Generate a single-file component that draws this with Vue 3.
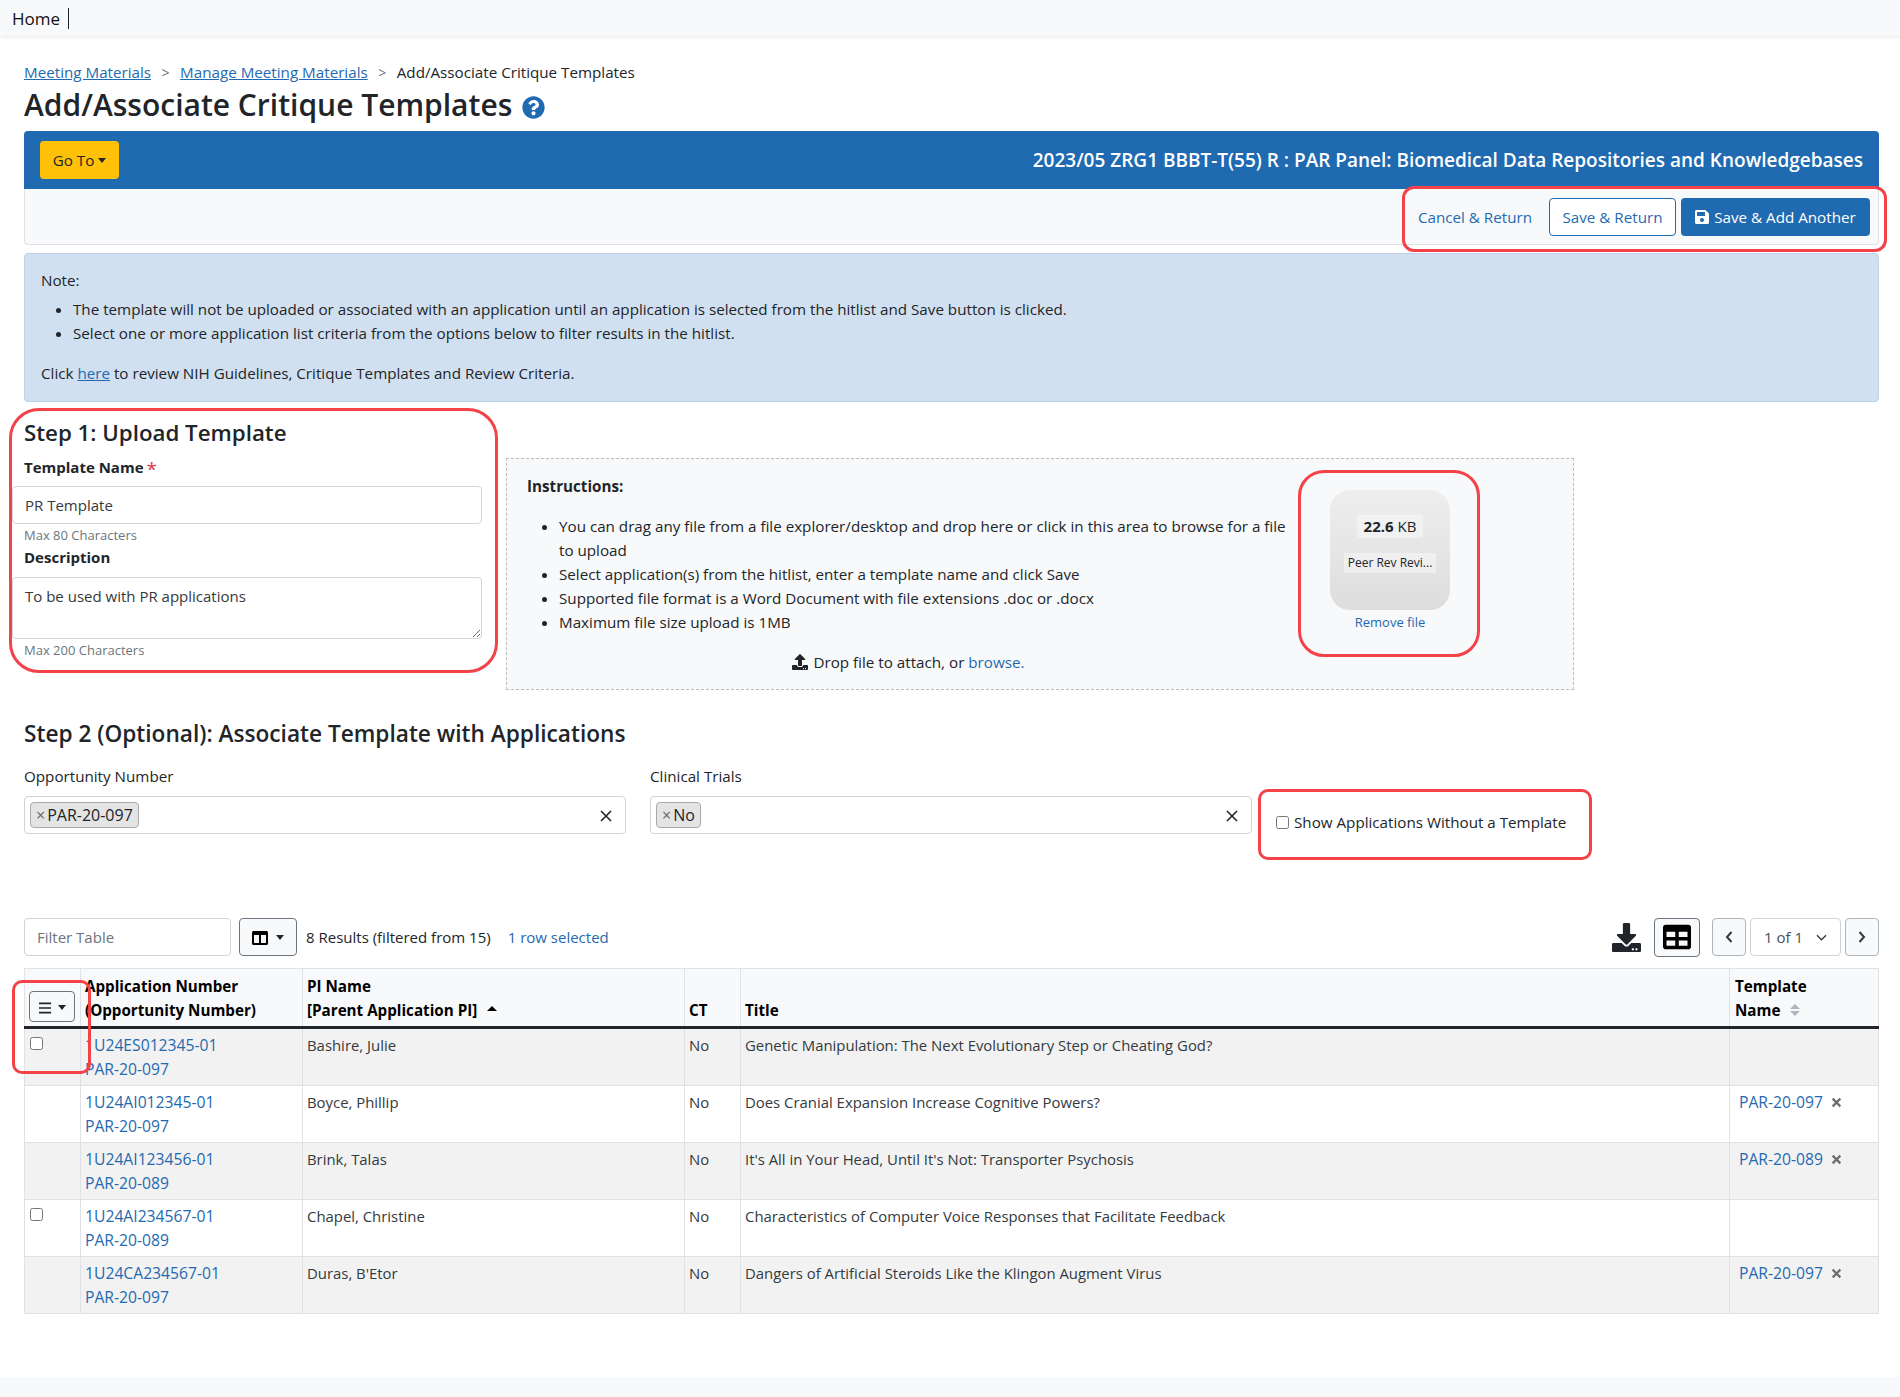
<template>
  <div class="app-root">
    <nav class="topnav"><a class="home-link">Home</a></nav>

    <main class="page">
      <div class="breadcrumb">
        <a class="link">Meeting Materials</a>
        <span class="crumb-sep">&gt;</span>
        <a class="link">Manage Meeting Materials</a>
        <span class="crumb-sep">&gt;</span>
        <span>Add/Associate Critique Templates</span>
      </div>
      <h1 class="page-title">
        Add/Associate Critique Templates
        <svg class="help-icon" viewBox="0 0 512 512"><path fill="#1f6ab0" d="M504 256c0 136.997-111.043 248-248 248S8 392.997 8 256C8 119.083 119.043 8 256 8s248 111.083 248 248zM262.655 90c-54.497 0-89.255 22.957-116.549 63.758-3.536 5.286-2.353 12.415 2.715 16.258l34.699 26.31c5.205 3.947 12.621 3.008 16.665-2.122 17.864-22.658 30.113-35.797 57.303-35.797 20.429 0 45.698 13.148 45.698 32.958 0 14.976-12.363 22.667-32.534 33.976C247.128 238.528 216 254.941 216 296v4c0 6.627 5.373 12 12 12h56c6.627 0 12-5.373 12-12v-1.333c0-28.462 83.186-29.647 83.186-106.667 0-58.002-60.165-102-116.531-102zM256 338c-25.365 0-46 20.635-46 46 0 25.364 20.635 46 46 46s46-20.636 46-46c0-25.365-20.635-46-46-46z"/></svg>
      </h1>

      <div class="meeting-bar">
        <button class="btn btn-goto">Go To<span class="caret"></span></button>
        <div class="meeting-name">2023/05 ZRG1 BBBT-T(55) R : PAR Panel: Biomedical Data Repositories and Knowledgebases</div>
      </div>
      <div class="action-bar">
        <a class="cancel-link">Cancel &amp; Return</a>
        <button class="btn btn-outline">Save &amp; Return</button>
        <button class="btn btn-primary">
          <svg class="save-icon" viewBox="0 0 448 512"><path fill="#fff" d="M433.941 129.941l-83.882-83.882A48 48 0 0 0 316.118 32H48C21.49 32 0 53.49 0 80v352c0 26.51 21.49 48 48 48h352c26.51 0 48-21.49 48-48V163.882a48 48 0 0 0-14.059-33.941zM224 416c-35.346 0-64-28.654-64-64 0-35.346 28.654-64 64-64s64 28.654 64 64c0 35.346-28.654 64-64 64zm96-304.52V212c0 6.627-5.373 12-12 12H76c-6.627 0-12-5.373-12-12V108c0-6.627 5.373-12 12-12h228.52c3.183 0 6.235 1.264 8.485 3.515l3.48 3.48A11.996 11.996 0 0 1 320 111.48z"/></svg>
          Save &amp; Add Another
        </button>
      </div>

      <div class="note">
        <div class="note-title">Note:</div>
        <ul>
          <li>The template will not be uploaded or associated with an application until an application is selected from the hitlist and Save button is clicked.</li>
          <li>Select one or more application list criteria from the options below to filter results in the hitlist.</li>
        </ul>
        <div class="note-foot">Click <a class="link">here</a> to review NIH Guidelines, Critique Templates and Review Criteria.</div>
      </div>

      <section class="step-one">
        <div class="upload-form">
          <h2 class="step-title">Step 1: Upload Template</h2>
          <label class="field-label label-first">Template Name<span class="required">*</span></label>
          <input class="text-input" type="text" value="PR Template" />
          <div class="hint">Max 80 Characters</div>
          <label class="field-label label-desc">Description</label>
          <textarea class="text-area">To be used with PR applications</textarea>
          <div class="hint">Max 200 Characters</div>
        </div>

        <div class="dropzone">
          <div class="dz-text">
            <div class="dz-heading">Instructions:</div>
            <ul>
              <li v-for="line in instructions" :key="line">{{ line }}</li>
            </ul>
            <div class="dz-drop">
              <svg class="upload-icon" viewBox="0 0 512 512"><path fill="#212529" d="M296 384h-80c-13.3 0-24-10.7-24-24V192h-87.7c-17.8 0-26.7-21.5-14.1-34.1L242.3 5.7c7.5-7.5 19.8-7.5 27.3 0l152.2 152.2c12.6 12.6 3.7 34.1-14.1 34.1H320v168c0 13.3-10.7 24-24 24zm216-8v112c0 13.3-10.7 24-24 24H24c-13.3 0-24-10.7-24-24V376c0-13.3 10.7-24 24-24h136v8c0 30.9 25.1 56 56 56h80c30.9 0 56-25.1 56-56v-8h136c13.3 0 24 10.7 24 24zm-124 88c0-11-9-20-20-20s-20 9-20 20 9 20 20 20 20-9 20-20zm64 0c0-11-9-20-20-20s-20 9-20 20 9 20 20 20 20-9 20-20z"/></svg>
              Drop file to attach, or <a class="browse">browse.</a>
            </div>
          </div>
          <div class="dz-preview">
            <div class="dz-image">
              <div class="dz-size"><strong>22.6</strong> KB</div>
              <div class="dz-file">Peer Rev Revi...</div>
            </div>
            <a class="dz-remove">Remove file</a>
          </div>
        </div>
      </section>

      <h2 class="step-title step-two">Step 2 (Optional): Associate Template with Applications</h2>
      <div class="filters">
        <div class="filter-col">
          <label class="filter-label">Opportunity Number</label>
          <div class="tag-select">
            <span class="tag"><span class="tag-x">×</span>PAR-20-097</span>
            <svg class="clear-x" viewBox="0 0 14 14"><path d="M2 2l10 10M12 2L2 12" stroke="#212529" stroke-width="1.6" fill="none"/></svg>
          </div>
        </div>
        <div class="filter-col">
          <label class="filter-label">Clinical Trials</label>
          <div class="tag-select">
            <span class="tag"><span class="tag-x">×</span>No</span>
            <svg class="clear-x" viewBox="0 0 14 14"><path d="M2 2l10 10M12 2L2 12" stroke="#212529" stroke-width="1.6" fill="none"/></svg>
          </div>
        </div>
        <label class="no-template"><input type="checkbox" />Show Applications Without a Template</label>
      </div>

      <div class="table-tools">
        <input class="filter-input" type="text" placeholder="Filter Table" />
        <button class="btn btn-light btn-columns">
          <svg class="columns-icon" viewBox="0 0 512 512"><path fill="#000" d="M464 32H48C21.49 32 0 53.49 0 80v352c0 26.51 21.49 48 48 48h416c26.51 0 48-21.49 48-48V80c0-26.51-21.49-48-48-48zM224 416H64V160h160v256zm224 0H288V160h160v256z"/></svg>
          <span class="caret caret-dark"></span>
        </button>
        <span class="result-count">8 Results (filtered from 15)</span>
        <span class="row-count">1 row selected</span>
        <span class="tools-spacer"></span>
        <svg class="download-icon" viewBox="0 0 512 512"><path fill="#212529" d="M216 0h80c13.3 0 24 10.7 24 24v168h87.7c17.8 0 26.7 21.5 14.1 34.1L269.7 378.3c-7.5 7.5-19.8 7.5-27.3 0L90.1 226.1c-12.6-12.6-3.7-34.1 14.1-34.1H192V24c0-13.3 10.7-24 24-24zm296 376v112c0 13.3-10.7 24-24 24H24c-13.3 0-24-10.7-24-24V376c0-13.3 10.7-24 24-24h146.7l49 49c20.1 20.1 52.5 20.1 72.6 0l49-49H488c13.3 0 24 10.7 24 24zm-124 88c0-11-9-20-20-20s-20 9-20 20 9 20 20 20 20-9 20-20zm64 0c0-11-9-20-20-20s-20 9-20 20 9 20 20 20 20-9 20-20z"/></svg>
        <button class="btn btn-light btn-table">
          <svg class="table-icon" viewBox="0 0 512 512"><path fill="#000" d="M464 32H48C21.49 32 0 53.49 0 80v352c0 26.51 21.49 48 48 48h416c26.51 0 48-21.49 48-48V80c0-26.51-21.49-48-48-48zM224 416H64v-96h160v96zm0-160H64v-96h160v96zm224 160H288v-96h160v96zm0-160H288v-96h160v96z"/></svg>
        </button>
        <button class="btn btn-page">
          <svg class="chev" viewBox="0 0 10 14"><path d="M7.5 2L3 7l4.5 5" stroke="#343a40" stroke-width="2" fill="none"/></svg>
        </button>
        <div class="page-select">
          <span>1 of 1</span>
          <svg class="chev-down" viewBox="0 0 14 10"><path d="M2 2.5l5 5 5-5" stroke="#343a40" stroke-width="1.5" fill="none"/></svg>
        </div>
        <button class="btn btn-page">
          <svg class="chev" viewBox="0 0 10 14"><path d="M2.5 2L7 7l-4.5 5" stroke="#343a40" stroke-width="2" fill="none"/></svg>
        </button>
      </div>

      <table class="app-table">
        <colgroup>
          <col style="width: 56px" />
          <col style="width: 222px" />
          <col style="width: 382px" />
          <col style="width: 56px" />
          <col />
          <col style="width: 149px" />
        </colgroup>
        <thead>
          <tr>
            <th class="select-head">
              <button class="btn btn-light btn-menu">
                <svg class="bars-icon" viewBox="0 0 14 12"><path d="M0 1h13M0 6h13M0 11h13" stroke="#212529" stroke-width="1.7"/></svg>
                <span class="caret caret-dark"></span>
              </button>
            </th>
            <th>Application Number<br />(Opportunity Number)</th>
            <th>PI Name<br />[Parent Application PI]<span class="sort-up"></span></th>
            <th>CT</th>
            <th>Title</th>
            <th class="template-head">Template<br />Name<span class="sort-both"><i></i><i></i></span></th>
          </tr>
        </thead>
        <tbody>
          <tr v-for="row in rows" :key="row.app">
            <td class="select-cell"><input v-if="row.selectable" type="checkbox" /></td>
            <td><a class="cell-link">{{ row.app }}</a><br /><a class="cell-link">{{ row.opp }}</a></td>
            <td>{{ row.pi }}</td>
            <td>No</td>
            <td>{{ row.title }}</td>
            <td class="template-cell">
              <template v-if="row.template">
                <a class="cell-link">{{ row.template }}</a>
                <svg class="remove-x" viewBox="0 0 10 10"><path d="M1.5 1.5l7 7M8.5 1.5l-7 7" stroke="#6c6c6c" stroke-width="2" fill="none"/></svg>
              </template>
            </td>
          </tr>
        </tbody>
      </table>
    </main>

    <footer class="page-footer"></footer>

    <!-- annotation boxes drawn on top of the screenshot -->
    <div class="callout callout-actions"></div>
    <div class="callout callout-upload"></div>
    <div class="callout callout-preview"></div>
    <div class="callout callout-check"></div>
    <div class="callout callout-select"></div>
  </div>
</template>

<script setup>
const instructions = [
  'You can drag any file from a file explorer/desktop and drop here or click in this area to browse for a file to upload',
  'Select application(s) from the hitlist, enter a template name and click Save',
  'Supported file format is a Word Document with file extensions .doc or .docx',
  'Maximum file size upload is 1MB'
]

const rows = [
  { app: '1U24ES012345-01', opp: 'PAR-20-097', pi: 'Bashire, Julie', title: 'Genetic Manipulation: The Next Evolutionary Step or Cheating God?', selectable: true },
  { app: '1U24AI012345-01', opp: 'PAR-20-097', pi: 'Boyce, Phillip', title: 'Does Cranial Expansion Increase Cognitive Powers?', template: 'PAR-20-097' },
  { app: '1U24AI123456-01', opp: 'PAR-20-089', pi: 'Brink, Talas', title: "It's All in Your Head, Until It's Not: Transporter Psychosis", template: 'PAR-20-089' },
  { app: '1U24AI234567-01', opp: 'PAR-20-089', pi: 'Chapel, Christine', title: 'Characteristics of Computer Voice Responses that Facilitate Feedback', selectable: true },
  { app: '1U24CA234567-01', opp: 'PAR-20-097', pi: "Duras, B'Etor", title: 'Dangers of Artificial Steroids Like the Klingon Augment Virus', template: 'PAR-20-097' }
]
</script>

<style>
body {
  margin: 0;
  background: #fff;
}
</style>

<style scoped>
.app-root {
  position: relative;
  height: 1397px;
  overflow: hidden;
  font-family: "Open Sans", "Noto Sans", sans-serif;
  font-size: 15.2px;
  line-height: 24px;
  color: #212529;
}

.topnav {
  height: 36px;
  background: #f8f9fa;
  box-shadow: 0 1px 4px rgba(0, 0, 0, 0.1);
  padding: 7px 0 0 12px;
  box-sizing: border-box;
}

.home-link {
  display: inline-block;
  height: 21px;
  line-height: 21px;
  padding-right: 8px;
  border-right: 1px solid #212529;
  font-size: 17px;
  color: #111;
}

.page {
  padding: 0 21px 0 24px;
}

.link {
  color: #1f6ab0;
  text-decoration: underline;
}

.breadcrumb {
  margin-top: 24px;
  height: 25px;
  font-size: 15.2px;
}

.crumb-sep {
  margin: 0 10.5px;
  font-size: 14px;
  color: #6c757d;
}

.page-title {
  margin: 0 0 6px;
  font-size: 30px;
  line-height: 40px;
  font-weight: 600;
  display: flex;
  align-items: center;
}

.help-icon {
  width: 23px;
  height: 23px;
  margin: 4px 0 0 10px;
}

.btn {
  font-family: inherit;
  font-size: 15.2px;
  line-height: 24px;
  height: 38px;
  border-radius: 4px;
  border: 1px solid transparent;
  box-sizing: border-box;
  padding: 0 12px;
}

.meeting-bar {
  height: 58px;
  background: #1f6ab0;
  border-radius: 4px 4px 0 0;
  padding: 0 16px;
  display: flex;
  align-items: center;
  justify-content: space-between;
}

.btn-goto {
  width: 79px;
  padding: 0;
  background: #ffc107;
  color: #212529;
}

.caret {
  display: inline-block;
  margin-left: 4px;
  vertical-align: 3px;
  border-top: 5px solid #212529;
  border-left: 4px solid transparent;
  border-right: 4px solid transparent;
}

.meeting-name {
  color: #fff;
  font-size: 19px;
  font-weight: 600;
}

.action-bar {
  height: 56px;
  box-sizing: border-box;
  background: #f8f9fa;
  border: 1px solid #dee2e6;
  border-top: 0;
  border-radius: 0 0 4px 4px;
  padding: 0 8px;
  display: flex;
  align-items: center;
  justify-content: flex-end;
}

.cancel-link {
  color: #1f6ab0;
  margin-right: 17px;
}

.btn-outline {
  width: 127px;
  padding: 0;
  background: #fff;
  border-color: #1f6ab0;
  color: #1f6ab0;
  margin-right: 5px;
}

.btn-primary {
  width: 189px;
  padding: 0;
  background: #1f6ab0;
  color: #fff;
}

.save-icon {
  width: 14px;
  height: 16px;
  vertical-align: -2px;
  margin-right: 1px;
}

.note {
  margin-top: 8px;
  height: 149px;
  box-sizing: border-box;
  background: #d1e0f0;
  border: 1px solid #bdd1e6;
  border-radius: 4px;
  padding: 14px 16px 0;
}

.note ul {
  margin: 5px 0 16px;
  padding-left: 32px;
}

.step-one {
  margin-top: 15px;
  display: flex;
  align-items: flex-start;
}

.upload-form {
  width: 470px;
  margin-left: -12px;
}

.upload-form .step-title,
.upload-form .field-label,
.upload-form .hint {
  margin-left: 12px;
}

.step-title {
  margin: 0;
  font-size: 22.3px;
  line-height: 32px;
  font-weight: 600;
}

.field-label {
  display: block;
  font-weight: 700;
  font-size: 15px;
  margin-bottom: 7px;
}

.label-first {
  margin-top: 6px;
}

.label-desc {
  margin-bottom: 8px;
}

.required {
  color: #dc3545;
  margin-left: 3px;
  font-size: 19px;
  line-height: 0;
  font-weight: 400;
  vertical-align: -3px;
}

.text-input,
.text-area,
.filter-input {
  display: block;
  width: 100%;
  box-sizing: border-box;
  font-family: inherit;
  font-size: 15px;
  color: #343a40;
  border: 1px solid #ced4da;
  border-radius: 4px;
  background: #fff;
  padding: 6px 12px;
  outline: none;
}

.text-input {
  height: 38px;
}

.text-area {
  height: 62px;
  line-height: 24px;
  resize: vertical;
}

.hint {
  font-size: 13px;
  line-height: 20px;
  color: #6c757d;
  margin-top: 1px;
}

.dropzone {
  margin: 41px 0 0 24px;
  width: 1068px;
  height: 232px;
  box-sizing: border-box;
  background: #f8f9fa;
  border: 1px dashed #bcbcbc;
  padding: 15px 20px;
  display: flex;
  align-items: flex-start;
}

.dz-text {
  width: 762px;
  margin-right: 41px;
  flex: none;
}

.dz-heading {
  font-weight: 700;
}

.dz-text ul {
  margin: 16px 0 0;
  padding-left: 32px;
}

.dz-preview {
  width: 120px;
  margin-top: 16px;
  text-align: center;
  flex: none;
}

.dz-image {
  height: 120px;
  border-radius: 20px;
  background: linear-gradient(to bottom, #eeeeee, #dddddd);
  box-sizing: border-box;
  padding-top: 24px;
}

.dz-size {
  display: inline-block;
  padding: 0 7px;
  background: rgba(255, 255, 255, 0.4);
  border-radius: 2px;
  line-height: 23px;
  font-size: 15px;
}

.dz-file {
  display: block;
  width: 92px;
  margin: 15px auto 0;
  font-size: 12px;
  line-height: 20px;
  background: rgba(255, 255, 255, 0.4);
  white-space: nowrap;
}

.dz-remove {
  display: block;
  font-size: 13px;
  line-height: 24px;
  color: #1f6ab0;
}

.dz-drop {
  text-align: center;
  margin-top: 16px;
}

.upload-icon {
  width: 16px;
  height: 16px;
  vertical-align: -2px;
  margin-right: 2px;
}

.browse {
  color: #1f6ab0;
}

.step-two {
  margin-top: 28px;
  font-size: 22.65px;
}

.filters {
  margin-top: 14px;
  display: flex;
  gap: 24px;
}

.filter-col {
  width: 602px;
}

.filter-label {
  display: block;
  margin-bottom: 8px;
}

.tag-select {
  height: 38px;
  box-sizing: border-box;
  background: #fff;
  border: 1px solid #ced4da;
  border-radius: 4px;
  padding: 5px 5px;
  display: flex;
  align-items: center;
  justify-content: space-between;
}

.tag {
  height: 26px;
  box-sizing: border-box;
  background: #e4e4e4;
  border: 1px solid #aaa;
  border-radius: 4px;
  padding: 0 5px;
  line-height: 24px;
  font-size: 16px;
}

.tag-x {
  color: #666;
  margin-right: 2px;
}

.clear-x {
  width: 14px;
  height: 14px;
  margin: 2px 7px 0 0;
}

.no-template {
  padding-top: 46px;
  display: block;
  white-space: nowrap;
}

.no-template input {
  width: 13px;
  height: 13px;
  margin: 0 5px 0 0;
  vertical-align: -1px;
}

.table-tools {
  margin-top: 84px;
  height: 38px;
  display: flex;
  align-items: center;
  font-size: 15px;
}

.filter-input {
  width: 207px;
  height: 38px;
}

.filter-input::placeholder {
  color: #6c757d;
}

.btn-light {
  background: #f8f9fa;
  border-color: #6c757d;
}

.btn-columns {
  width: 58px;
  margin-left: 8px;
  padding: 0;
}

.columns-icon {
  width: 16px;
  height: 16px;
  vertical-align: -3px;
}

.caret-dark {
  margin-left: 8px;
}

.result-count {
  margin-left: 9px;
}

.row-count {
  margin-left: 17px;
  color: #1f6ab0;
}

.tools-spacer {
  flex: 1;
}

.download-icon {
  width: 29px;
  height: 29px;
  margin-right: 13px;
}

.btn-table {
  width: 46px;
  height: 39px;
  padding: 0;
  margin-right: 12px;
}

.table-icon {
  width: 28px;
  height: 28px;
  vertical-align: middle;
}

.btn-page {
  width: 34px;
  padding: 0;
  background: #f8f9fa;
  border-color: #adb5bd;
}

.chev {
  width: 10px;
  height: 14px;
  vertical-align: -1px;
}

.page-select {
  width: 91px;
  height: 38px;
  margin: 0 4px;
  box-sizing: border-box;
  border: 1px solid #ced4da;
  border-radius: 4px;
  padding: 0 12px 0 13px;
  display: flex;
  align-items: center;
  justify-content: space-between;
  color: #495057;
}

.chev-down {
  width: 13px;
  height: 9px;
}

.app-table {
  margin-top: 12px;
  width: 100%;
  table-layout: fixed;
  border-collapse: collapse;
  font-size: 14.9px;
  color: #343a40;
}

.app-table th {
  height: 59px;
  box-sizing: border-box;
  background: #f8f9fa;
  color: #000;
  font-size: 15.2px;
  font-weight: 700;
  text-align: left;
  vertical-align: bottom;
  padding: 5px 4px 4px;
  border: 1px solid #dee2e6;
  border-bottom: 3px solid #212529;
}

.select-head {
  padding: 0 4px 4px !important;
}

.template-head {
  padding-left: 5px !important;
}

.btn-menu {
  display: block;
  width: 46px;
  height: 31px;
  padding: 0;
}

.bars-icon {
  width: 13px;
  height: 12px;
  vertical-align: -1px;
}

.btn-menu .caret {
  margin-left: 6px;
}

.sort-up {
  display: inline-block;
  margin-left: 10px;
  vertical-align: 5px;
  border-bottom: 5px solid #000;
  border-left: 5px solid transparent;
  border-right: 5px solid transparent;
}

.sort-both {
  display: inline-block;
  margin-left: 10px;
  vertical-align: 0;
}

.sort-both i {
  display: block;
  border-left: 5px solid transparent;
  border-right: 5px solid transparent;
}

.sort-both i:first-child {
  border-bottom: 5px solid #adb5bd;
  margin-bottom: 2px;
}

.sort-both i:last-child {
  border-top: 5px solid #adb5bd;
}

.app-table td {
  height: 57px;
  box-sizing: border-box;
  vertical-align: top;
  padding: 4px 4px 4px;
  border: 1px solid #dee2e6;
}

.app-table tbody tr:nth-child(odd) td {
  background: #f2f2f2;
}

.select-cell input {
  width: 13px;
  height: 13px;
  margin: 4px 0 0 1px;
  display: block;
}

.cell-link {
  color: #1f6ab0;
  font-size: 15.7px;
}

.template-cell {
  padding-left: 9px !important;
}

.remove-x {
  width: 11px;
  height: 11px;
  margin-left: 8px;
}

.page-footer {
  position: absolute;
  left: 0;
  right: 0;
  bottom: 0;
  height: 20px;
  background: #f8f9fa;
}

.callout {
  position: absolute;
  box-sizing: border-box;
  border: 3px solid #f44249;
  pointer-events: none;
}

.callout-actions {
  left: 1402px;
  top: 186px;
  width: 485px;
  height: 66px;
  border-radius: 12px;
}

.callout-upload {
  left: 9px;
  top: 408px;
  width: 489px;
  height: 265px;
  border-radius: 30px;
}

.callout-preview {
  left: 1298px;
  top: 470px;
  width: 182px;
  height: 187px;
  border-radius: 26px;
}

.callout-check {
  left: 1258px;
  top: 789px;
  width: 334px;
  height: 71px;
  border-radius: 10px;
}

.callout-select {
  left: 12px;
  top: 980px;
  width: 79px;
  height: 94px;
  border-radius: 10px;
}
</style>
